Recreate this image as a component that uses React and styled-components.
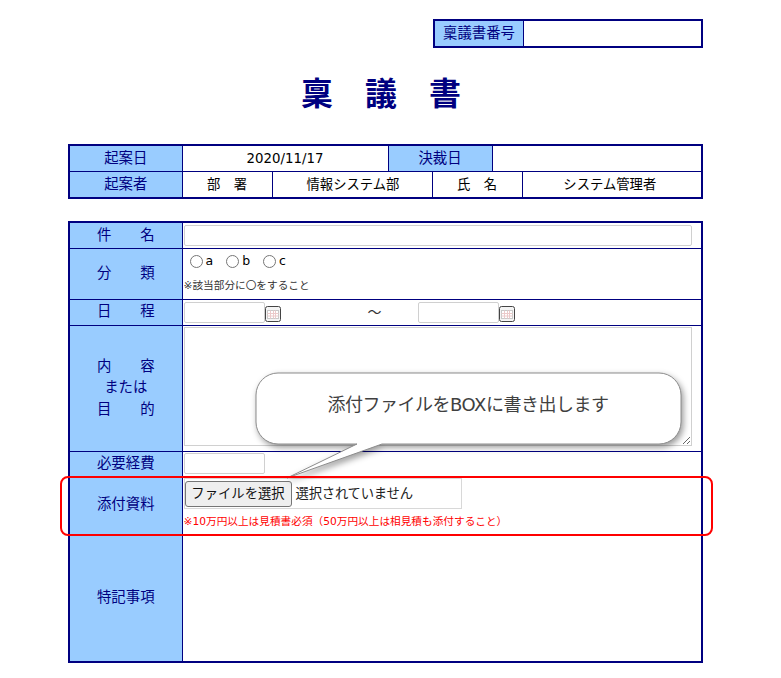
import styled, { createGlobalStyle } from "styled-components";

const navy = "#000080";
const sky = "#99ccff";

export default function App() {
  return (
    <Page>
      <GlobalStyle />

      <NumberRow>
        <NumberTable>
          <tbody>
            <tr>
              <NumberLabel>稟議書番号</NumberLabel>
              <Cell />
            </tr>
          </tbody>
        </NumberTable>
      </NumberRow>

      <Title>稟　議　書</Title>

      <HeadTable>
        <colgroup>
          <col width="113" />
          <col width="90" />
          <col width="116" />
          <col width="44" />
          <col width="60" />
          <col width="30" />
          <col width="180" />
        </colgroup>
        <tbody>
          <FormRow $h={26}>
            <Label>起案日</Label>
            <Cell colSpan={2}>2020/11/17</Cell>
            <Label colSpan={2}>決裁日</Label>
            <Cell colSpan={2} />
          </FormRow>
          <FormRow $h={27}>
            <Label>起案者</Label>
            <Cell>部　署</Cell>
            <DeptCell colSpan={2}>情報システム部</DeptCell>
            <Cell colSpan={2}>氏　名</Cell>
            <OwnerCell>システム管理者</OwnerCell>
          </FormRow>
        </tbody>
      </HeadTable>

      <BaseTable>
        <colgroup>
          <col width="113" />
          <col width="520" />
        </colgroup>
        <tbody>
          <FormRow $h={26}>
            <Label>件　　名</Label>
            <InputCell>
              <TextInput $w={508} />
            </InputCell>
          </FormRow>
          <FormRow $h={51}>
            <Label>分　　類</Label>
            <InputCell>
              <RadioRow>
                <RadioLabel>
                  <Radio name="kind" />a
                </RadioLabel>
                <RadioLabel>
                  <Radio name="kind" />b
                </RadioLabel>
                <RadioLabel>
                  <Radio name="kind" />c
                </RadioLabel>
              </RadioRow>
              <Note>※該当部分に〇をすること</Note>
            </InputCell>
          </FormRow>
          <FormRow $h={26}>
            <Label>日　　程</Label>
            <InputCell>
              <DateRow>
                <DateField>
                  <TextInput $w={81} />
                  <CalendarIcon />
                </DateField>
                <Tilde>～</Tilde>
                <DateField>
                  <TextInput $w={81} />
                  <CalendarIcon />
                </DateField>
              </DateRow>
            </InputCell>
          </FormRow>
          <FormRow $h={126}>
            <Label>
              内　　容
              <br />
              または
              <br />
              目　　的
            </Label>
            <InputCell>
              <Memo />
            </InputCell>
          </FormRow>
          <FormRow $h={25}>
            <Label>必要経費</Label>
            <InputCell>
              <TextInput $w={81} />
            </InputCell>
          </FormRow>
          <FormRow $h={58}>
            <Label>添付資料</Label>
            <InputCell>
              <FileBox>
                <FileButton type="button">ファイルを選択</FileButton>
                <FileName>選択されていません</FileName>
              </FileBox>
              <Warning>※10万円以上は見積書必須（50万円以上は相見積も添付すること）</Warning>
            </InputCell>
          </FormRow>
          <FormRow $h={128}>
            <Label>特記事項</Label>
            <InputCell />
          </FormRow>
        </tbody>
      </BaseTable>

      <Balloon>
        <BalloonShape width="449" height="125" viewBox="0 0 449 125">
          <path
            d="M24 1 H405 A22 22 0 0 1 427 23 V50 A22 22 0 0 1 405 72 H128 L33 106 L103 72 H24 A22 22 0 0 1 2 50 V23 A22 22 0 0 1 24 1 Z"
            fill="#fff"
            stroke="#8c8c8c"
            strokeWidth="1"
          />
        </BalloonShape>
        <BalloonText>添付ファイルをBOXに書き出します</BalloonText>
      </Balloon>

      <Highlight />
    </Page>
  );
}

function CalendarIcon() {
  return (
    <CalendarButton width="16" height="16" viewBox="0 0 16 16">
      <rect x="0.5" y="0.5" width="15" height="15" rx="2" fill="#f4f4f4" stroke="#444" />
      <rect x="2.5" y="4.5" width="11" height="8" fill="#fff" stroke="#c9c9c9" />
      <path d="M5.5 4.5V12.5M8.5 4.5V12.5M10.5 4.5V12.5M2.5 7.5H13.5M2.5 10H13.5" stroke="#eccaca" />
    </CalendarButton>
  );
}

const GlobalStyle = createGlobalStyle`
  html, body {
    margin: 0;
    padding: 0;
    background: #fff;
  }

  body {
    font-family: "DejaVu Sans", "Noto Sans CJK JP", sans-serif;
    font-size: 13.33px;
    color: #000;
  }
`;

const Page = styled.div`
  position: relative;
  width: 781px;
  height: 678px;
  padding: 19px 0 0 68px;
  box-sizing: border-box;
  overflow: hidden;
`;

const NumberRow = styled.div`
  display: flex;
  justify-content: flex-end;
  width: 635px;
`;

const BaseTable = styled.table`
  border-collapse: collapse;
  table-layout: fixed;
  border: 2px solid ${navy};
  width: 635px;
`;

const NumberTable = styled(BaseTable)`
  width: 270px;
  height: 29px;
`;

const Cell = styled.td`
  border: 1px solid ${navy};
  padding: 0;
  text-align: center;
  vertical-align: middle;
  line-height: 1;
`;

const DeptCell = styled(Cell)`
  padding-left: 2px;
`;

const OwnerCell = styled(Cell)`
  padding-right: 4px;
`;

const Label = styled(Cell)`
  background: ${sky};
  color: ${navy};
  font-size: 14.4px;
  line-height: 21.5px;
`;

const NumberLabel = styled(Label)`
  width: 88px;
`;

const Title = styled.h1`
  width: 626px;
  margin: 24px 0 28px;
  text-align: center;
  color: ${navy};
  font-size: 32px;
  font-weight: 700;
  line-height: 44px;
`;

const HeadTable = styled(BaseTable)`
  margin-bottom: 22px;
`;

const FormRow = styled.tr`
  height: ${(p) => p.$h}px;
`;

const InputCell = styled(Cell)`
  text-align: left;
  padding: 0 0 0 1px;
`;

const TextInput = styled.input`
  display: block;
  width: ${(p) => p.$w}px;
  height: 21px;
  box-sizing: border-box;
  border: 1px solid #d0d0d0;
  border-radius: 2px;
  padding: 0;
  background: #fff;
`;

const RadioRow = styled.div`
  display: flex;
  gap: 13px;
  margin-top: -1px;
  padding-left: 6px;
  font-size: 12.5px;
`;

const RadioLabel = styled.label`
  display: flex;
  align-items: center;
  gap: 3px;
  height: 16px;
`;

const Radio = styled.input.attrs({ type: "radio" })`
  width: 13px;
  height: 13px;
  margin: 0;
`;

const Note = styled.div`
  margin-top: 10px;
  color: #333;
  font-size: 10.67px;
  line-height: 14px;
`;

const DateRow = styled.div`
  display: flex;
  align-items: center;
`;

const DateField = styled.div`
  display: flex;
  align-items: center;
`;

const CalendarButton = styled.svg`
  display: block;
  margin-top: 3px;
  flex: none;
`;

const Tilde = styled.span`
  width: 137px;
  box-sizing: border-box;
  padding-left: 87px;
  font-size: 14px;
  color: #333;
`;

const Memo = styled.textarea`
  display: block;
  width: 508px;
  height: 119px;
  box-sizing: border-box;
  margin: 0 0 4px;
  border: 1px solid #d0d0d0;
  padding: 0;
`;

const FileBox = styled.div`
  display: flex;
  align-items: center;
  gap: 4px;
  width: 278px;
  height: 31px;
  margin-top: -3px;
  box-sizing: border-box;
  border: 1px solid #d8d8d8;
  font-size: 13.33px;
  color: #222;
`;

const FileButton = styled.button`
  width: 107px;
  height: 26px;
  padding: 0;
  border: 1px solid #767676;
  border-radius: 3px;
  background: #efefef;
  color: #111;
  font: inherit;
`;

const FileName = styled.span`
  letter-spacing: -0.2px;
`;

const Warning = styled.div`
  margin-top: 6px;
  color: #ff0000;
  font-size: 10.67px;
  line-height: 14px;
`;

const Balloon = styled.div`
  position: absolute;
  left: 254px;
  top: 372px;
  width: 449px;
  height: 125px;
`;

const BalloonShape = styled.svg`
  position: absolute;
  left: 0;
  top: 0;
  overflow: visible;
  filter: drop-shadow(2px 3px 3px rgba(0, 0, 0, 0.4));
`;

const BalloonText = styled.div`
  position: relative;
  width: 428px;
  height: 62px;
  display: flex;
  align-items: center;
  justify-content: center;
  color: #404040;
  font-size: 18px;
  letter-spacing: -0.5px;
`;

const Highlight = styled.div`
  position: absolute;
  left: 60px;
  top: 476px;
  width: 653px;
  height: 60px;
  box-sizing: border-box;
  border: 2px solid #f00;
  border-radius: 8px;
  pointer-events: none;
`;
